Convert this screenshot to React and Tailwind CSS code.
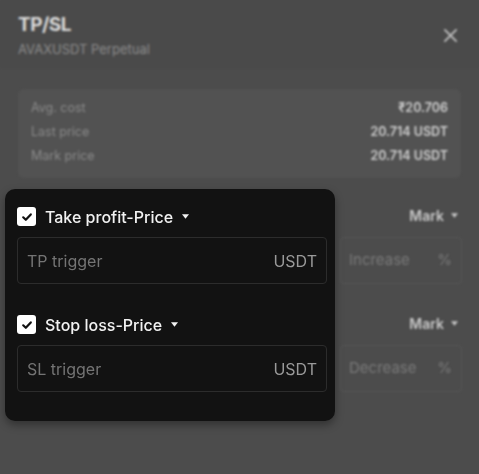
import React from "react";

function Caret({ className }) {
  return (
    <svg viewBox="0 0 8 5" className={className} fill="currentColor">
      <path d="M0 0 L8 0 L4 5 Z" />
    </svg>
  );
}

function Check() {
  return (
    <div className="w-[19px] h-[19px] rounded-[3px] bg-white flex items-center justify-center shrink-0">
      <svg viewBox="0 0 12 12" className="w-[12px] h-[12px]" fill="none" stroke="#111" strokeWidth="2.2" strokeLinecap="round" strokeLinejoin="round">
        <path d="M2.2 6.3 L4.8 8.8 L9.8 3.4" />
      </svg>
    </div>
  );
}

function BgRow({ right }) {
  return (
    <div className="flex flex-col">
      <div className="h-[22px] flex items-center justify-end pr-[4px] text-[14px] font-semibold text-[#c9c9c9]">
        <span>Mark</span>
        <Caret className="w-[7px] h-[5px] ml-[7px] text-[#c9c9c9]" />
      </div>
      <div className="mt-[11px] flex gap-[13px]">
        <div className="w-[310px] h-[47px] rounded-[4px] border border-[#565656]" />
        <div className="w-[122px] h-[47px] rounded-[4px] border border-[#565656] flex items-center justify-between pl-[8px] pr-[9px] text-[15px] text-[#7a7a7a]">
          <span>{right}</span>
          <span>%</span>
        </div>
      </div>
    </div>
  );
}

export default function App() {
  return (
    <div
      className="w-[479px] h-[474px] relative overflow-hidden bg-[#4c4c4c]"
      style={{ fontFamily: "Inter, 'Noto Sans', sans-serif" }}
    >
      <div className="blur-[1.2px] flex flex-col">
        <div className="h-[68px] flex justify-between px-[18px] pt-[12px] border-b border-[#4a4a4a] bg-[#4a4a4a]">
          <div className="flex flex-col">
            <span className="text-[19px] leading-[25px] font-bold text-[#dadada] tracking-[-0.5px]">TP/SL</span>
            <span className="text-[13px] leading-[18px] mt-[3px] text-[#8c8c8c]">AVAXUSDT Perpetual</span>
          </div>
          <svg viewBox="0 0 16 16" className="w-[15px] h-[15px] mt-[16px] mr-[3px]" fill="none" stroke="#bdbdbd" strokeWidth="2" strokeLinecap="round">
            <path d="M2 2 L14 14 M14 2 L2 14" />
          </svg>
        </div>
        <div className="mx-[18px] mt-[21px] h-[89px] rounded-[6px] bg-[#525252] px-[13px] pt-[7px] flex flex-col text-[12.5px]">
          <div className="h-[24px] flex items-center justify-between">
            <span className="text-[#8a8a8a]">Avg. cost</span>
            <span className="text-[#d0d0d0] font-semibold">₹20.706</span>
          </div>
          <div className="h-[24px] flex items-center justify-between">
            <span className="text-[#8a8a8a]">Last price</span>
            <span className="text-[#d0d0d0] font-semibold">20.714 USDT</span>
          </div>
          <div className="h-[24px] flex items-center justify-between">
            <span className="text-[#8a8a8a]">Mark price</span>
            <span className="text-[#d0d0d0] font-semibold">20.714 USDT</span>
          </div>
        </div>
        <div className="px-[17px] mt-[26px] flex flex-col gap-[28px]">
          <BgRow right="Increase" />
          <BgRow right="Decrease" />
        </div>
      </div>

      <div className="absolute left-[5px] top-[189px] w-[330px] h-[232px] rounded-[10px] bg-[#121212] shadow-[0_4px_8px_rgba(0,0,0,0.35)] pl-[12px] pr-[8px] pt-[18px] flex flex-col">
        <div className="flex items-center h-[19px]">
          <Check />
          <span className="ml-[9px] text-[16px] text-[#f2f2f2] font-medium">Take profit-Price</span>
          <Caret className="w-[7px] h-[5px] ml-[9px] text-[#f2f2f2]" />
        </div>
        <div className="mt-[11px] h-[47px] rounded-[4px] border border-[#2c2c2c] flex items-center justify-between px-[9px] text-[16px]">
          <span className="text-[#747474]">TP trigger</span>
          <span className="text-[#9a9a9a]">USDT</span>
        </div>
        <div className="flex items-center h-[19px] mt-[31px]">
          <Check />
          <span className="ml-[9px] text-[16px] text-[#f2f2f2] font-medium">Stop loss-Price</span>
          <Caret className="w-[7px] h-[5px] ml-[9px] text-[#f2f2f2]" />
        </div>
        <div className="mt-[11px] h-[47px] rounded-[4px] border border-[#2c2c2c] flex items-center justify-between px-[9px] text-[16px]">
          <span className="text-[#747474]">SL trigger</span>
          <span className="text-[#9a9a9a]">USDT</span>
        </div>
      </div>
    </div>
  );
}
